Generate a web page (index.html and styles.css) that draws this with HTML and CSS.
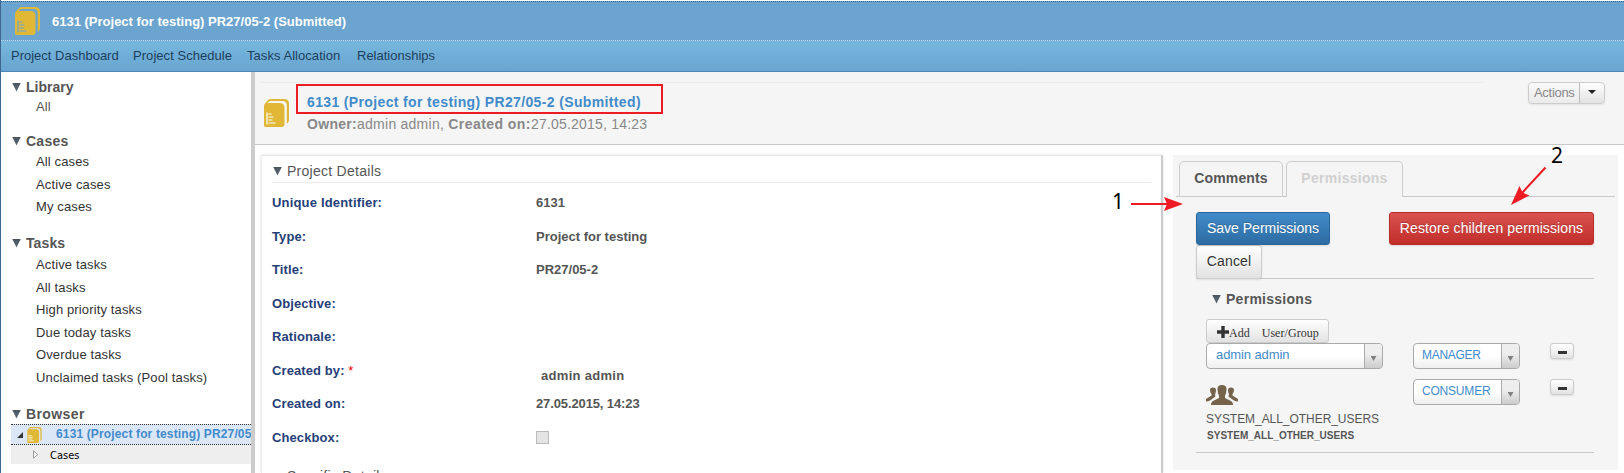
FILE: index.html
```html
<!DOCTYPE html>
<html lang="en">
<head>
<meta charset="utf-8">
<title>6131 (Project for testing) PR27/05-2</title>
<link rel="stylesheet" href="styles.css">
</head>
<body>
<svg class="defs" width="0" height="0">
  <symbol id="book" viewBox="0 0 25 28">
    <path d="M4 1 Q5 0 7 0 H20 Q25 0 25 5 V21 Q25 23.500 22.800 25 V6.500 Q22.800 2 18.500 2 H7 Q4.500 2 3.500 4 H15.500 Q20.500 4 20.500 8.500 V25 Q20.500 28 17.500 28 H1.500 Q0 28 0 26.500 V7 Q0 5.500 1 4.500 Z" fill="#e0b835"/>
    <path d="M3 13.500 V25.500 M4.500 15 H7.500 M4.500 18 H9.500 M4.500 21 H8.500 M4.500 24 H11.500" fill="none" stroke="currentColor" stroke-width="1.200"/>
  </symbol>
</svg>
<div class="app">
  <header class="titlebar">
    <svg class="book book-top"><use href="#book"/></svg>
    <span class="titlebar-text">6131 (Project for testing) PR27/05-2 (Submitted)</span>
  </header>
  <nav class="menu">
    <a class="m1">Project Dashboard</a><a class="m2">Project Schedule</a><a class="m3">Tasks Allocation</a><a class="m4">Relationships</a>
  </nav>
  <div class="body">
    <aside class="sidebar">
      <h2 class="side-title"><i class="tri"></i><span>Library</span></h2>
      <ul class="side-list lib"><li>All</li></ul>
      <h2 class="side-title"><i class="tri"></i><span class="t-cases">Cases</span></h2>
      <ul class="side-list cases"><li>All cases</li><li>Active cases</li><li>My cases</li></ul>
      <h2 class="side-title"><i class="tri"></i><span class="t-tasks">Tasks</span></h2>
      <ul class="side-list tasks"><li>Active tasks</li><li>All tasks</li><li>High priority tasks</li><li>Due today tasks</li><li>Overdue tasks</li><li>Unclaimed tasks (Pool tasks)</li></ul>
      <h2 class="side-title"><i class="tri"></i><span class="t-browser">Browser</span></h2>
      <div class="tree-row selected">
        <svg class="open" width="6" height="6"><path d="M0 6 L6 0 V6 Z" fill="#333"/></svg>
        <svg class="book book-small"><use href="#book"/></svg>
        <span class="tree-label">6131 (Project for testing) PR27/05</span>
      </div>
      <div class="tree-row child">
        <svg class="closed" width="6" height="9"><path d="M.5 .8 L4.800 4.500 L.5 8.200 Z" fill="#fff" stroke="#999"/></svg>
        <span>Cases</span>
      </div>
    </aside>
    <div class="splitter"></div>
    <main class="content">
      <section class="head">
        <div class="head-rule"></div>
        <svg class="book book-head"><use href="#book"/></svg>
        <div class="head-text">
          <div class="head-title"><span>6131 (Project for testing) PR27/05-2 (Submitted)</span></div>
          <p class="head-meta"><b class="owner">Owner:</b><span class="admin">admin admin, </span><b class="created">Created on:</b><span class="date">27.05.2015, 14:23</span></p>
        </div>
        <div class="actions"><span class="actions-label">Actions</span><span class="actions-caret"><i></i></span></div>
      </section>
      <div class="columns">
        <section class="card">
          <h3 class="card-title"><i class="tri"></i><span>Project Details</span></h3>
          <dl class="fields">
            <dt class="f-uid">Unique Identifier:</dt><dd>6131</dd>
            <dt>Type:</dt><dd>Project for testing</dd>
            <dt>Title:</dt><dd>PR27/05-2</dd>
            <dt>Objective:</dt><dd></dd>
            <dt>Rationale:</dt><dd></dd>
            <dt>Created by: <em>*</em></dt><dd class="by">admin admin</dd>
            <dt>Created on:</dt><dd class="on">27.05.2015, 14:23</dd>
            <dt>Checkbox:</dt><dd><i class="check"></i></dd>
          </dl>
          <h3 class="card-next">Specific Details</h3>
        </section>
        <section class="panel">
          <div class="tabs"><span class="edge"></span><span class="tab active"><b>Comments</b></span><span class="edge"></span><span class="tab current"><b>Permissions</b></span><span class="edge rest"></span></div>
          <div class="panel-body">
            <div class="buttons">
              <span class="btn primary"><span>Save Permissions</span></span>
              <span class="btn danger"><span>Restore children permissions</span></span>
            </div>
            <div class="cancel-row"><span class="btn cancel">Cancel</span></div>
            <h4 class="perm-title"><i class="tri"></i><span>Permissions</span></h4>
            <div class="perms">
              <span class="add"><svg width="12" height="12"><path d="M4.300 0 H7.700 V4.300 H12 V7.700 H7.700 V12 H4.300 V7.700 H0 V4.300 H4.300 Z" fill="#333"/></svg><span class="add-a">Add</span><span class="add-b">User/Group</span></span>
              <div class="perm-row">
                <span class="select wide"><span class="sel-text s-admin">admin admin</span><i></i></span>
                <span class="select role"><span class="sel-text s-man">MANAGER</span><i></i></span>
                <span class="minus"></span>
              </div>
              <div class="perm-row">
                <div class="group">
                  <svg width="32" height="20" viewBox="0 0 32 20"><path d="M5 20 Q5 16.500 8 15.500 L13 13 V10.500 Q11.500 8.500 11.500 4 Q11.500 0 16 0 Q20.500 0 20.500 4 Q20.500 8.500 19 10.500 V13 L24 15.500 Q27 16.500 27 20 Z M0 16.500 V14 L5.500 10.500 V9 Q4 7.500 4 5 Q4 2.500 7 2.500 Q10 2.500 10 5 Q10 7.500 9 9.500 L9.500 11.500 L4 15.500 Q2 16.500 0 16.500 Z M32 16.500 V14 L26.500 10.500 V9 Q28 7.500 28 5 Q28 2.500 25 2.500 Q22 2.500 22 5 Q22 7.500 23 9.500 L22.500 11.500 L28 15.500 Q30 16.500 32 16.500 Z" fill="#75634b"/></svg>
                  <span class="g1">SYSTEM_ALL_OTHER_USERS</span>
                  <b class="g2">SYSTEM_ALL_OTHER_USERS</b>
                </div>
                <span class="select role"><span class="sel-text s-con">CONSUMER</span><i></i></span>
                <span class="minus"></span>
              </div>
            </div>
          </div>
        </section>
      </div>
    </main>
  </div>
  <span class="note n1">1</span>
  <svg class="note a1" width="53" height="14"><path d="M0 7 H36" stroke="#ed1c24" stroke-width="2"/><path d="M33 0 L52 7 L33 14 L36 7 Z" fill="#ed1c24"/></svg>
  <span class="note n2">2</span>
  <svg class="note a2" width="36" height="40"><path d="M34.500 1.500 L11 27" stroke="#ed1c24" stroke-width="2"/><path d="M0 39 L8.500 20 L11.500 26.500 L18.500 29.500 Z" fill="#ed1c24"/></svg>
</div>
</body>
</html>
```
FILE: styles.css
```css
* { box-sizing: border-box; }
body { margin: 0; font-family: "Liberation Sans", Arial, sans-serif; font-size: 13px; color: #333; background: #fff; }
h2, h3, h4, p, ul, dl, dd { margin: 0; padding: 0; }
ul { list-style: none; }
i { font-style: normal; }
.defs { position: absolute; }
.app { position: relative; width: 1624px; height: 473px; overflow: hidden; border-left: 1px solid #3f6591; display: flex; flex-direction: column; white-space: nowrap; }
.tri { flex: none; width: 9px; height: 9px; background: linear-gradient(#4a545d, #5e6d7a); clip-path: polygon(0 0, 100% 0, 50% 100%); }
.book { flex: none; width: 25px; height: 28px; }

.titlebar { flex: none; height: 40px; margin-top: 1px; border-top: 1px dotted #35668c; border-bottom: 1px dotted #c5dcec; background: #6ba4cf; display: flex; align-items: center; padding-left: 14px; }
.book-top { color: #6ba4cf; }
.titlebar-text { margin-left: 12px; color: #fff; font-weight: bold; font-size: 13px; }
.menu { flex: none; height: 31px; background: linear-gradient(#77b7dd, #69a5d0); border-bottom: 1px solid #4d87b5; display: flex; align-items: center; padding: 0 0 2px 10px; color: #1c3f5e; font-size: 13px; }
.m1 { width: 122px; } .m2 { width: 114px; } .m3 { width: 110px; }
.m2, .m3 { letter-spacing: .05px; }

.body { flex: 1; display: flex; min-height: 0; }
.sidebar { width: 250px; overflow: hidden; padding-top: 5px; }
.splitter { flex: none; width: 4px; background: #ccc; }
.side-title { height: 20px; line-height: 20px; display: flex; align-items: center; font-size: 14px; color: #555; padding-left: 11px; gap: 5px; }
.t-cases { letter-spacing: .25px; }
.t-tasks { letter-spacing: .1px; }
.t-browser { letter-spacing: .4px; }
.side-list li { padding-left: 35px; height: 22.600px; line-height: 22.600px; letter-spacing: .13px; }
.side-list.lib { height: 34px; }
.side-list.lib li { height: 20px; line-height: 20px; color: #555; }
.side-list.cases { height: 82px; }
.side-list.tasks { height: 151px; padding-top: 1px; }
.tree-row { display: flex; align-items: center; margin-left: 10px; overflow: hidden; }
.selected { height: 21px; border-top: 1px dotted #333; border-bottom: 1px dotted #333; background: #dbe6f7; }
.open { margin-left: 6px; flex: none; }
.book-small { width: 15px; height: 16px; margin-left: 4px; color: #fff; }
.tree-label { margin-left: 14px; font: bold 12px "Liberation Sans", Arial, sans-serif; letter-spacing: .14px; color: #428bca; margin-top: -1px; }
.child { height: 19px; background: #eee; font: 11px "DejaVu Sans Condensed", "DejaVu Sans", sans-serif; color: #000; }
.child span { padding-top: 1px; }
.closed { margin: 0 11px 0 22px; }

.content { flex: 1; min-width: 0; display: flex; flex-direction: column; }
.head { flex: none; position: relative; height: 73px; background: #f5f5f5; border-bottom: 1px solid #c8c8c8; display: flex; align-items: flex-start; padding-left: 9px; }
.head-rule { position: absolute; left: 5px; top: 10px; width: 1223px; height: 1px; background: #ececec; }
.book-head { margin-top: 27px; color: #fff; }
.head-text { position: relative; margin: 12px 0 0 7px; width: 367px; }
.head-title { height: 30px; border: 2px solid #ed1c24; line-height: 32px; padding-left: 9px; font-size: 14px; font-weight: bold; color: #428bca; letter-spacing: .36px; }
.head-meta { line-height: 20px; font-size: 14px; color: #888; padding-left: 11px; white-space: pre; }
.owner { letter-spacing: .3px; }
.admin { letter-spacing: .25px; }
.created { letter-spacing: .45px; }
.date { letter-spacing: .2px; }
.actions { display: flex; width: 77px; height: 22px; margin: 10px 19px 0 auto; border: 1px solid #ccc; border-radius: 4px; background: linear-gradient(#fff, #e2e2e2); box-shadow: 0 1px 2px rgba(0,0,0,.08); }
.actions-label { width: 51px; padding-left: 5px; letter-spacing: -.3px; line-height: 20px; color: #888; border-right: 1px solid #bbb; background: linear-gradient(#f9f9f9, #ebebeb); border-radius: 4px 0 0 4px; }
.actions-caret { flex: 1; display: flex; justify-content: center; padding-top: 7px; }
.actions-caret i { width: 8px; height: 4px; background: #222; clip-path: polygon(0 0, 100% 0, 50% 100%); }

.columns { flex: 1; display: flex; padding: 10px 5px 0 6px; min-height: 0; }
.card { width: 902px; padding: 4px 10px 0 10px; border-top: 1px solid #e4e4e4; border-left: 1px solid #eee; border-right: 2px solid #ccc; box-shadow: 0 0 3px rgba(0,0,0,.12); overflow: hidden; }
.card-title { display: flex; align-items: center; gap: 5px; height: 23px; padding: 0 0 0 1px; font-size: 14px; font-weight: normal; letter-spacing: .27px; color: #555; border-bottom: 1px solid #eaeaea; }
.fields { display: grid; grid-template-columns: 264px 1fr; grid-auto-rows: 33.570px; margin-top: 3px; font-weight: bold; line-height: 33px; color: #555; }
.fields dt { color: #264078; letter-spacing: .1px; }
.fields .f-uid { letter-spacing: .18px; }
.fields em { font-style: normal; font-weight: normal; color: #f00; }
.fields .by { padding: 5px 0 0 5px; letter-spacing: .3px; }
.fields .on { letter-spacing: -.12px; }
.check { display: block; width: 13px; height: 13px; margin-top: 10px; border: 1px solid #bbb; background: #e4e4e4; }
.card-next { margin: 13px 0 0 15px; font-size: 14px; font-weight: normal; line-height: 16px; color: #555; letter-spacing: .27px; }
.panel { width: 445px; height: 315px; margin-left: 10px; background: #f5f5f5; }
.tabs { display: flex; padding: 6px 3px 0 3px; height: 42px; color: #ccc; }
.edge { width: 3px; border-bottom: 1px solid #c8c8c8; }
.edge.rest { flex: 1; }
.tab { height: 36px; border: 1px solid #ccc; border-radius: 5px 5px 0 0; font-size: 14px; line-height: 33px; text-align: center; letter-spacing: .15px; }
.tab.active { width: 104px; color: #555; }
.tab.current { width: 117px; border-bottom: 0; color: #d0d0d0; letter-spacing: .28px; }
.panel-body { padding: 15px 24px 0 23px; }
.buttons { display: flex; justify-content: space-between; }
.btn { height: 33px; border-radius: 3px; border: 1px solid; font-size: 14px; line-height: 30px; text-align: center; text-shadow: 0 -1px 0 rgba(0,0,0,.2); color: #fff; box-shadow: 0 1px 2px rgba(0,0,0,.1); }
.primary { width: 134px; background: linear-gradient(#428bca, #2d6ca2); border-color: #2b669a; }
.danger { width: 205px; background: linear-gradient(#d9534f, #c12e2a); border-color: #b92c28; letter-spacing: .1px; }
.cancel-row { height: 34px; border-bottom: 1px solid #c8c8c8; }
.cancel { display: block; width: 66px; height: 34px; color: #333; border-color: #ccc; background: linear-gradient(#fff, #e2e2e2); text-shadow: 0 1px 0 #fff; letter-spacing: .15px; }
.perm-title { display: flex; align-items: center; gap: 5px; height: 20px; margin: 10px 0; padding-left: 16px; font-size: 14px; letter-spacing: .27px; color: #555; }
.perms { height: 134px; padding-left: 10px; border-bottom: 1px solid #c8c8c8; }
.add { display: flex; align-items: center; width: 123px; height: 24px; border: 1px solid #ccc; border-radius: 3px; background: linear-gradient(#fff, #e2e2e2); padding: 5px 0 0 10px; font: 12px "Liberation Serif", "Times New Roman", serif; color: #333; }
.add svg { margin-top: -4px; }
.add-a { margin: 0 12px 0 0; }
.add-b { letter-spacing: .05px; }
.perm-row { display: flex; align-items: flex-start; height: 36px; }
.select { display: flex; height: 26px; border: 1px solid #aaa; border-radius: 4px; background: linear-gradient(#fff 50%, #eee); color: #428bca; }
.sel-text { flex: 1; padding-left: 8px; line-height: 22px; }
.s-admin { letter-spacing: -.1px; padding-left: 9px; }
.s-man, .s-con { font-size: 12px; letter-spacing: -.3px; line-height: 23px; }
.s-con { letter-spacing: -.2px; }
.select i { width: 18px; border-left: 1px solid #aaa; background: linear-gradient(#eee 40%, #ccc); border-radius: 0 3px 3px 0; display: flex; justify-content: center; padding-top: 12px; }
.select i::before { content: ""; width: 6px; height: 5px; background: #808080; clip-path: polygon(0 0, 100% 0, 50% 100%); }
.wide { width: 177px; margin-right: 30px; }
.role { width: 107px; margin-right: 30px; }
.minus { width: 24px; height: 16px; border: 1px solid #ccc; border-radius: 3px; background: linear-gradient(#fff, #e2e2e2); box-shadow: 0 1px 2px rgba(0,0,0,.1); padding: 7px 0 0 7px; }
.minus::before { content: ""; display: block; width: 9px; height: 3px; background: #333; }
.group { width: 207px; display: flex; flex-direction: column; padding-top: 6px; color: #555; }
.g1 { line-height: 16px; margin-top: 6px; font-size: 12px; letter-spacing: -.05px; }
.g2 { line-height: 12px; margin-top: 3px; padding-left: 1px; font-size: 10px; letter-spacing: .02px; }

.note { position: absolute; color: #000; font: 21px/20px "Noto Sans", sans-serif; }
.n1 { left: 1111px; top: 191px; }
.n2 { left: 1550px; top: 145px; }
.a1 { left: 1130px; top: 197px; }
.a2 { left: 1510px; top: 166px; }
```
